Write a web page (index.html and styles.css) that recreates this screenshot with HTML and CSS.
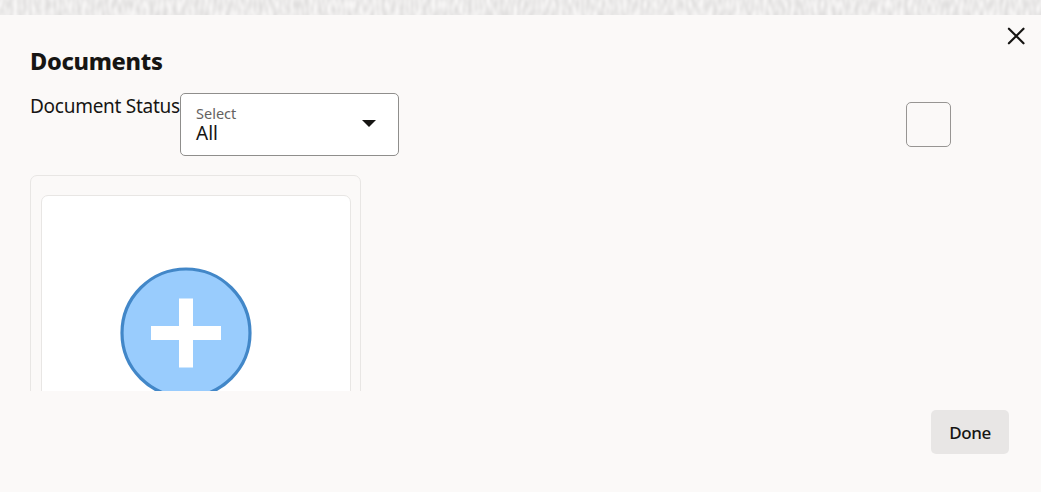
FILE: index.html
```html
<!DOCTYPE html>
<html lang="en">
<head>
    <meta charset="utf-8">
    <title>Documents</title>
    <link rel="stylesheet" href="styles.css">
</head>
<body>
    <svg class="texture" width="1041" height="15" aria-hidden="true">
        <filter id="grain" x="0" y="0" width="100%" height="100%" color-interpolation-filters="sRGB">
            <feTurbulence type="fractalNoise" baseFrequency="0.22 0.1" numOctaves="1" seed="4"/>
            <feColorMatrix values="0.16 0 0 0 0.845  0.16 0 0 0 0.84  0.16 0 0 0 0.838  0 0 0 0 1"/>
        </filter>
        <rect width="1041" height="15" filter="url(#grain)"/>
    </svg>

    <div class="dialog" role="dialog" aria-labelledby="title">
        <button class="close" aria-label="Close">
            <svg width="18" height="18" viewBox="0 0 18 18">
                <path d="M1.9 1.7 L16.5 16.3 M16.5 1.7 L1.9 16.3"/>
            </svg>
        </button>

        <div class="content">
            <h1 id="title">Documents</h1>

            <div class="toolbar">
                <span class="status-label">Document Status</span>
                <div class="select" role="combobox" aria-label="Select">
                    <div class="select-text">
                        <span class="select-label">Select</span>
                        <span class="select-value">All</span>
                    </div>
                    <svg class="caret" width="14" height="7" viewBox="0 0 14 7">
                        <path d="M0 0 H14 L7 7 Z"/>
                    </svg>
                </div>
                <button class="view-toggle" aria-label="Toggle view"></button>
            </div>

            <div class="card">
                <div class="card-inner">
                    <svg class="add" width="132" height="132" viewBox="0 0 132 132">
                        <circle cx="66" cy="66" r="64"/>
                        <path d="M59 31.5 h14 v27.5 h28 v14 h-28 v27.5 h-14 v-27.5 h-28 v-14 h28 z"/>
                    </svg>
                </div>
            </div>
        </div>

        <div class="footer">
            <button class="done">Done</button>
        </div>
    </div>
</body>
</html>
```

FILE: styles.css
```css
* {
    box-sizing: border-box;
}
body {
    margin: 0;
    font-family: "Noto Sans", "Open Sans", sans-serif;
    color: #161513;
    background: #fff;
    overflow: hidden;
}
button {
    padding: 0;
    font-family: inherit;
    color: inherit;
    cursor: pointer;
}
.texture {
    display: block;
}
.dialog {
    position: relative;
    height: 477px;
    background: #fbf9f8;
}
.close {
    position: absolute;
    top: 12px;
    right: 16px;
    width: 18px;
    height: 18px;
    border: none;
    background: none;
}
.close svg {
    display: block;
}
.close path {
    stroke: #161513;
    stroke-width: 2.2;
    stroke-linecap: round;
}
.content {
    height: 376px;
    padding: 30px 30px 0;
    overflow: hidden;
}
h1 {
    margin: 0 0 16px;
    font-size: 23.5px;
    line-height: 32px;
    font-weight: 800;
    letter-spacing: -0.3px;
}
.toolbar {
    display: flex;
    align-items: flex-start;
    height: 82px;
}
.status-label {
    width: 150px;
    padding-top: 1px;
    font-size: 19px;
    line-height: 24px;
    letter-spacing: -0.27px;
    white-space: nowrap;
}
.select {
    display: flex;
    align-items: center;
    justify-content: space-between;
    width: 219px;
    height: 63px;
    padding: 0 22px 2px 15px;
    border: 1px solid #8f8e8c;
    border-radius: 5px;
    background: #fff;
}
.select-text {
    display: flex;
    flex-direction: column;
}
.select-label {
    font-size: 14.5px;
    line-height: 18px;
    color: #65625f;
}
.select-value {
    font-size: 19px;
    line-height: 22px;
}
.caret path {
    fill: #161513;
}
.view-toggle {
    width: 45px;
    height: 45px;
    margin: 9px 60px 0 auto;
    border: 1px solid #979593;
    border-radius: 5px;
    background: transparent;
}
.card {
    width: 331px;
    height: 340px;
    padding: 19px 9px 0 10px;
    border: 1px solid #e8e6e4;
    border-radius: 7px;
}
.card-inner {
    height: 300px;
    padding: 71px 0 0 78px;
    border: 1px solid #e8e6e4;
    border-radius: 7px;
    background: #fff;
}
.add {
    display: block;
}
.add circle {
    fill: #99ccfd;
    stroke: #4287c8;
    stroke-width: 3.2;
}
.add path {
    fill: #fff;
}
.footer {
    display: flex;
    justify-content: flex-end;
    padding: 19px 32px 0 0;
}
.done {
    width: 78px;
    height: 44px;
    border: none;
    border-radius: 5px;
    font-size: 17px;
    font-weight: 500;
    letter-spacing: -0.4px;
    background: #e8e6e5;
}
```
